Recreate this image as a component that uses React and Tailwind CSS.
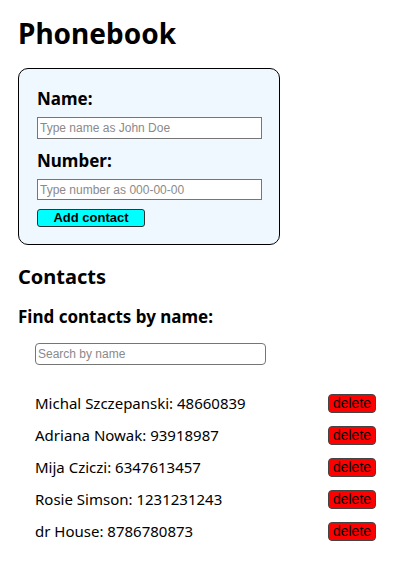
const contacts = [
  { id: 1, name: 'Michal Szczepanski', number: '48660839' },
  { id: 2, name: 'Adriana Nowak', number: '93918987' },
  { id: 3, name: 'Mija Cziczi', number: '6347613457' },
  { id: 4, name: 'Rosie Simson', number: '1231231243' },
  { id: 5, name: 'dr House', number: '8786780873' },
];

export default function App() {
  return (
    <div className="min-h-screen bg-white px-[18px] pt-[14px] text-black font-['Noto_Sans',sans-serif]">
      <h1 className="text-[28px] font-bold leading-[38px]">Phonebook</h1>

      <form className="mt-[16px] w-[262px] h-[177px] rounded-[10px] border border-black bg-[#f0f8ff] px-[18px] pt-[17px]">
        <label className="block text-[17px] font-bold leading-[26px]">Name:</label>
        <input
          type="text"
          placeholder="Type name as John Doe"
          className="mt-[5px] block w-[225px] h-[22px] border border-[#767676] bg-white px-[2px] text-[12px] font-['Liberation_Sans',sans-serif] placeholder:text-[#8a8a8a] outline-none"
        />
        <label className="mt-[9px] block text-[17px] font-bold leading-[26px]">Number:</label>
        <input
          type="text"
          placeholder="Type number as 000-00-00"
          className="mt-[5px] block w-[225px] h-[21px] border border-[#767676] bg-white px-[2px] text-[12px] font-['Liberation_Sans',sans-serif] placeholder:text-[#8a8a8a] outline-none"
        />
        <button
          type="button"
          className="mt-[9px] block w-[108px] h-[18px] rounded-[3px] border border-[#333] bg-[#00ffff] text-[13px] font-bold leading-[16px] font-['Liberation_Sans',sans-serif]"
        >
          Add contact
        </button>
      </form>

      <h2 className="mt-[18px] text-[20px] font-bold leading-[28px]">Contacts</h2>
      <h3 className="mt-[14px] text-[17px] font-bold leading-[24px]">Find contacts by name:</h3>
      <input
        type="text"
        placeholder="Search by name"
        className="mt-[14px] ml-[17px] block w-[231px] h-[22px] rounded-[4px] border border-[#767676] bg-white px-[2px] text-[12px] font-['Liberation_Sans',sans-serif] placeholder:text-[#8a8a8a] outline-none"
      />

      <ul className="mt-[22px] ml-[17px] w-[341px]">
        {contacts.map((c) => (
          <li key={c.id} className="flex h-[32px] items-center justify-between">
            <span className="text-[15px] leading-[20px]">
              {c.name}: {c.number}
            </span>
            <button
              type="button"
              className="w-[48px] h-[19px] rounded-[4px] border border-[#444] bg-[#ff0000] text-[14px] leading-[16px] font-['Liberation_Sans',sans-serif]"
            >
              delete
            </button>
          </li>
        ))}
      </ul>
    </div>
  );
}
